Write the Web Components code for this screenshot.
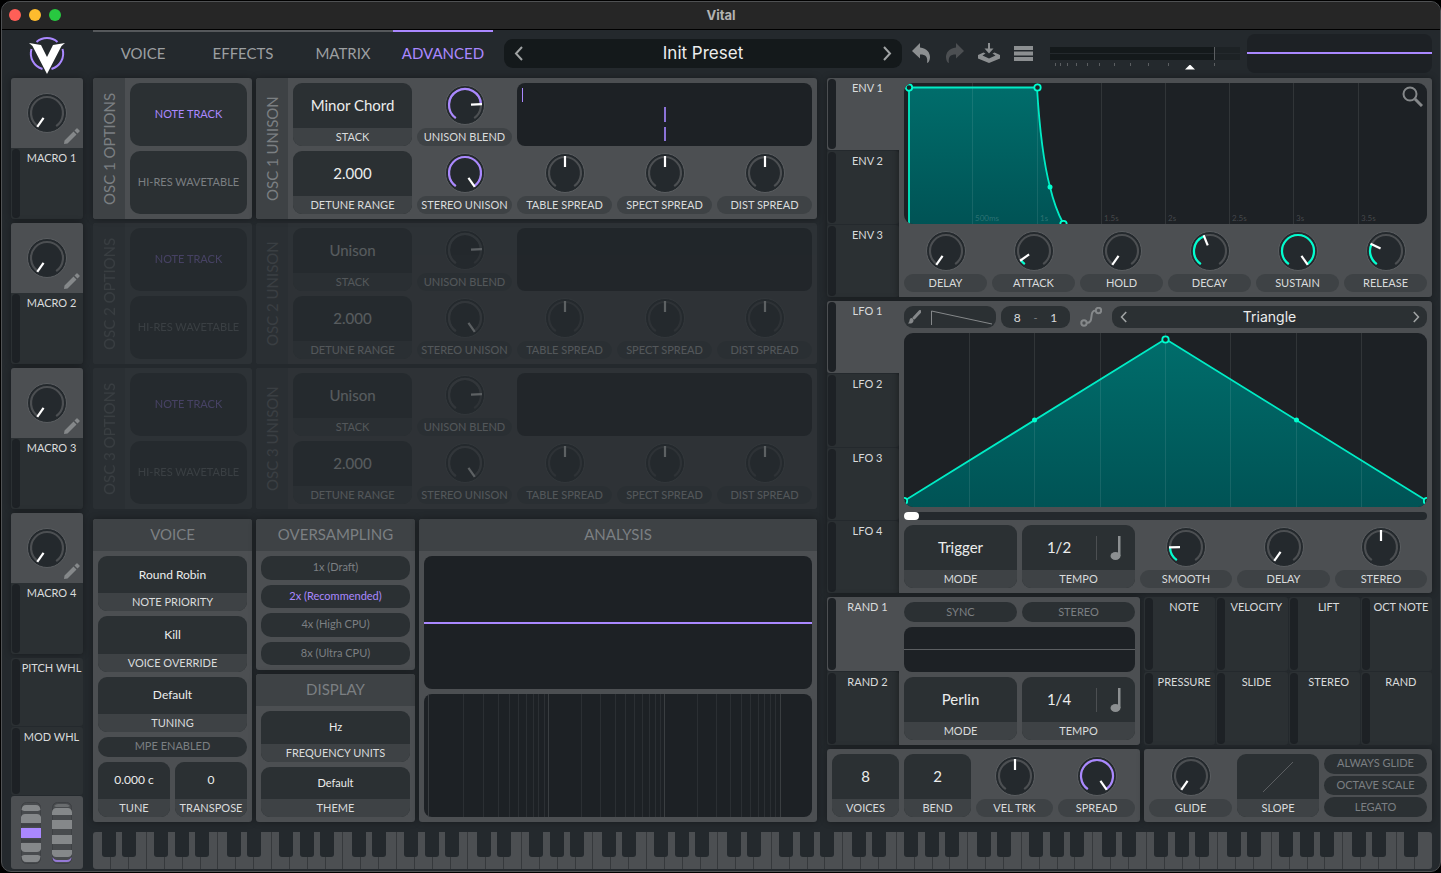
<!DOCTYPE html>
<html lang="en">
<head>
<meta charset="utf-8">
<meta name="viewport" content="width=device-width, initial-scale=1">
<title>Vital</title>
<style>
  :root {
    --bg: #24292d;
    --panel: #4c4f52;
    --strip: #3e4245;
    --box: #2b3033;
    --graph: #1d2125;
    --text: #d9dbdc;
    --muted: #7b7f82;
    --purple: #aa88ff;
    --teal: #00ffd0;
  }
  body {
    margin: 0;
    background: #000;
    color: var(--text);
    font-family: Lato, "Open Sans", sans-serif;
    font-size: 11px;
  }
</style>
</head>
<body>
<synth-window heading="Vital">
  <synth-header></synth-header>
  <synth-body></synth-body>
</synth-window>

<script>
  const resetStyles = `
    *, *::before, *::after { box-sizing: border-box; }
    button, input, select {
      font: inherit;
      color: inherit;
      background: none;
      border: 0;
      margin: 0;
      padding: 0;
      min-width: 0;
      appearance: none;
      outline: none;
    }
    button { cursor: pointer; }
    svg { display: block; }
  `;

  class SynthElement extends HTMLElement {
    connectedCallback() {
      if (this.shadowRoot) return;
      this.attachShadow({ mode: 'open' });
      this.shadowRoot.innerHTML = `<style>${resetStyles}${this.styles()}</style>${this.markup()}`;
    }

    attr(name, fallback = '') {
      return this.hasAttribute(name) ? this.getAttribute(name) : fallback;
    }

    styles() { return ''; }
    markup() { return '<slot></slot>'; }
  }

  // Window frame

  class SynthWindow extends SynthElement {
    styles() {
      return `
        :host {
          display: block;
          margin: 1px 0 0 1px;
          border: 1px solid #4f5153;
          border-radius: 10px;
          overflow: hidden;
          background: var(--bg);
        }
        header {
          display: grid;
          grid-template-columns: 1fr auto 1fr;
          align-items: center;
          height: 28px;
          padding: 0 7px 2px;
          background: #262626;
          border-bottom: 1px solid #000;
        }
        .lights { display: flex; gap: 8px; }
        .lights button { width: 12px; height: 12px; border-radius: 50%; }
        .close { background: #ff5f57; }
        .minimize { background: #febc2e; }
        .zoom { background: #28c840; }
        h1 {
          margin: 0;
          font: 700 13px/16px Inter, sans-serif;
          color: #b3b3b3;
        }
      `;
    }
    markup() {
      return `
        <header>
          <div class="lights">
            <button class="close" aria-label="Close"></button>
            <button class="minimize" aria-label="Minimize"></button>
            <button class="zoom" aria-label="Zoom"></button>
          </div>
          <h1>${this.attr('heading')}</h1>
        </header>
        <slot></slot>
      `;
    }
  }
  customElements.define('synth-window', SynthWindow);

  // Small controls

  class KnobControl extends SynthElement {
    styles() {
      return `
        :host { display: flex; flex-direction: column; height: 63px; min-width: 0; }
        :host([bare]) { height: 44px; }
        .dial { flex: 1; display: grid; place-items: start center; padding-top: 2px; }
        .dial > * { grid-area: 1 / 1; }
        input { width: 40px; height: 40px; opacity: 0; cursor: pointer; }
        label {
          height: 18px;
          line-height: 18px;
          border-radius: 9px;
          background: var(--strip);
          text-align: center;
          white-space: nowrap;
        }
        :host([bare]) label { display: none; }
        .value { stroke: var(--arc, var(--purple)); }
      `;
    }
    point(angle, radius) {
      const rad = angle * Math.PI / 180;
      return `${(20 + radius * Math.sin(rad)).toFixed(2)} ${(20 - radius * Math.cos(rad)).toFixed(2)}`;
    }
    arc(from, to) {
      const large = to - from > 180 ? 1 : 0;
      return `M${this.point(from, 16)} A16 16 0 ${large} 1 ${this.point(to, 16)}`;
    }
    markup() {
      const angle = Number(this.attr('angle', '-145'));
      const filled = this.hasAttribute('filled')
        ? `<path class="value" d="${this.arc(-145, angle)}" fill="none" stroke-width="2.200"/>`
        : '';
      return `
        <div class="dial">
          <svg width="40" height="40" viewBox="0 0 40 40" aria-hidden="true">
            <circle cx="20" cy="20" r="19.5" fill="#24292d" stroke="#5b5e61"/>
            <path d="${this.arc(-145, 145)}" fill="none" stroke="#4c4f52" stroke-width="2.200"/>
            ${filled}
            <path d="M${this.point(angle, 6)} L${this.point(angle, 17)}" stroke="#fff" stroke-width="2.200"/>
          </svg>
          <input id="knob" type="range" min="-145" max="145" value="${angle}">
        </div>
        <label for="knob">${this.attr('label')}</label>
      `;
    }
  }
  customElements.define('knob-control', KnobControl);

  class ValueBox extends SynthElement {
    styles() {
      return `
        :host {
          display: flex;
          flex-direction: column;
          height: 63px;
          min-width: 0;
          border-radius: 9px;
          overflow: hidden;
          background: var(--box);
        }
        .field { flex: 1; display: flex; align-items: center; min-height: 0; }
        select, input {
          flex: 1;
          width: 100%;
          height: 100%;
          padding-bottom: 1px;
          text-align: center;
          text-align-last: center;
          font-size: var(--value-size, 15px);
          color: #eceded;
        }
        label {
          height: 18px;
          line-height: 18px;
          background: var(--strip);
          text-align: center;
          white-space: nowrap;
        }
      `;
    }
    markup() {
      const value = this.attr('value');
      const field = this.hasAttribute('number')
        ? `<input id="field" type="text" value="${value}">`
        : `<select id="field"><option>${value}</option></select>`;
      return `
        <div class="field">${field}<slot></slot></div>
        <label for="field">${this.attr('label')}</label>
      `;
    }
  }
  customElements.define('value-box', ValueBox);

  class ToggleButton extends SynthElement {
    styles() {
      return `
        :host { display: flex; min-height: 19px; min-width: 0; }
        button {
          flex: 1;
          padding-bottom: 2px;
          border-radius: 10px;
          background: var(--box);
          color: var(--muted);
          white-space: nowrap;
        }
        :host([on]) button { color: var(--purple); }
      `;
    }
    markup() {
      return `<button type="button" aria-pressed="${this.hasAttribute('on')}"><slot></slot></button>`;
    }
  }
  customElements.define('toggle-button', ToggleButton);

  class NoteSwitch extends SynthElement {
    styles() {
      return `
        :host { display: flex; width: 39px; height: 24px; border-left: 1px solid #4c4f52; }
        button { flex: 1; display: grid; place-items: center; }
      `;
    }
    markup() {
      return `
        <button type="button" aria-label="Tempo type">
          <svg width="12" height="24" viewBox="0 0 12 24" fill="#8c8f91">
            <rect x="8" y="0" width="2.500" height="20"/>
            <ellipse cx="5.500" cy="20" rx="5" ry="4"/>
          </svg>
        </button>
      `;
    }
  }
  customElements.define('note-switch', NoteSwitch);

  class ModSource extends SynthElement {
    styles() {
      return `
        :host {
          display: flex;
          min-width: 0;
          background: var(--box);
          border-radius: 3px;
        }
        :host([active]) { background: var(--panel); }
        i {
          flex: none;
          width: 8px;
          margin: 1px 0 1px 1px;
          border-radius: 4px;
          background: var(--graph);
        }
        button {
          flex: 1;
          display: flex;
          justify-content: center;
          line-height: 20px;
          white-space: nowrap;
        }
      `;
    }
    markup() {
      return `<i></i><button type="button"><slot></slot></button>`;
    }
  }
  customElements.define('mod-source', ModSource);

  class SynthPanel extends SynthElement {
    styles() {
      return `
        :host {
          display: flex;
          flex-direction: column;
          min-width: 0;
          border-radius: 3px;
          overflow: hidden;
          background: var(--panel);
          box-shadow: 0 0 7px #0005;
        }
        :host([side]) { flex-direction: row; }
        h2 {
          flex: none;
          margin: 0;
          padding-bottom: 2px;
          font-size: 15px;
          font-weight: 400;
          line-height: 30px;
          text-align: center;
          color: var(--muted);
          background: var(--strip);
        }
        :host([side]) h2 {
          width: 32px;
          padding: 0;
          line-height: 32px;
          writing-mode: vertical-rl;
          transform: rotate(180deg);
        }
        .content {
          flex: 1;
          min-width: 0;
          display: flex;
          flex-direction: column;
          gap: 5px;
          padding: 5px;
        }
      `;
    }
    markup() {
      const heading = this.attr('heading');
      return `${heading ? `<h2>${heading}</h2>` : ''}<div class="content"><slot></slot></div>`;
    }
  }
  customElements.define('synth-panel', SynthPanel);

  // Header

  class VitalLogo extends SynthElement {
    styles() { return ':host { display: block; }'; }
    markup() {
      return `
        <svg width="40" height="40" viewBox="0 0 40 40" role="img" aria-label="Vital logo">
          <g fill="none" stroke="#aa88ff" stroke-width="2">
            <path d="M9.5 7 A16 16 0 0 1 30.500 7"/>
            <path d="M4.500 14 A16 16 0 0 0 15.500 34"/>
            <path d="M35.500 14 A16 16 0 0 1 24.500 34"/>
          </g>
          <path d="M2 8 L14 10 L20 22 L26 10 L38 8 L34.500 11 L20 39 L5.500 11 Z" fill="#fff"/>
        </svg>
      `;
    }
  }
  customElements.define('vital-logo', VitalLogo);

  class PresetSelector extends SynthElement {
    styles() {
      return `
        :host {
          display: flex;
          min-width: 0;
          height: 29px;
          border-radius: 9px;
          background: #14191b;
          font-family: Inter, sans-serif;
          font-size: 17px;
          color: #eceded;
        }
        :host([small]) { height: 22px; background: var(--box); font-size: 14px; }
        .name { flex: 1; padding-bottom: 1px; }
        .arrow { width: 29px; display: grid; place-items: center; }
        :host([small]) .arrow { width: 22px; }
        .arrow svg { width: 9px; height: 15px; fill: none; stroke: #a0a3a4; stroke-width: 2; }
        :host([small]) .arrow svg { width: 7px; height: 12px; }
      `;
    }
    markup() {
      return `
        <button class="arrow" type="button" aria-label="Previous"><svg viewBox="0 0 9 15"><path d="M8 1 L2 7.500 L8 14"/></svg></button>
        <button class="name" type="button"><slot></slot></button>
        <button class="arrow" type="button" aria-label="Next"><svg viewBox="0 0 9 15"><path d="M1 1 L7 7.500 L1 14"/></svg></button>
      `;
    }
  }
  customElements.define('preset-selector', PresetSelector);

  class VolumeMeter extends SynthElement {
    styles() {
      return `
        :host { display: grid; width: 190px; height: 24px; }
        svg, input { grid-area: 1 / 1; }
        input { align-self: end; width: 190px; height: 6px; }
        input::-webkit-slider-thumb {
          appearance: none;
          width: 10px;
          height: 5px;
          background: #fff;
          clip-path: polygon(50% 0, 100% 100%, 0 100%);
        }
      `;
    }
    markup() {
      const ticks = [5, 10, 17, 26, 37, 49, 64, 80, 98, 118, 164]
        .map(x => `<path d="M${x}.5 17 V20" stroke="#5b5e61"/>`).join('');
      return `
        <svg width="190" height="24" viewBox="0 0 190 24" aria-hidden="true">
          <rect width="190" height="13" y="1" fill="#1d2225"/>
          <rect width="164" height="13" y="1" fill="#14191b"/>
          <path d="M0 7.500 H190" stroke="#24292d"/>
          <path d="M164.500 1 V14" stroke="#5b5e61"/>
          ${ticks}
        </svg>
        <input type="range" min="0" max="100" value="75" aria-label="Volume">
      `;
    }
  }
  customElements.define('volume-meter', VolumeMeter);

  class SynthHeader extends SynthElement {
    styles() {
      return `
        :host {
          box-sizing: border-box;
          display: flex;
          align-items: center;
          height: 48px;
          padding: 0 8px 2px 9px;
        }
        vital-logo { width: 72px; padding: 4px 0 0 16px; box-sizing: border-box; }
        nav { align-self: start; display: flex; margin: 0 11px 0 10px; }
        nav button {
          width: 100px;
          height: 47px;
          padding-bottom: 4px;
          border-top: 2px solid #55585b;
          font-size: 15px;
          color: #9c9fa1;
        }
        nav button.current { border-color: var(--purple); color: var(--purple); }
        preset-selector { flex: 1; }
        .tools { display: flex; margin: 0 10px 0 2px; }
        .tools button { width: 34px; height: 34px; display: grid; place-items: center; }
        .tools svg { fill: #8c8f91; }
        .tools .off svg { fill: #4c4f52; }
        volume-meter { margin: 10px 7px 0 0; }
        .scope {
          width: 185px;
          height: 39px;
          border-radius: 8px;
          background: linear-gradient(#aa88ff, #aa88ff) center / 100% 2px no-repeat var(--graph);
        }
      `;
    }
    markup() {
      return `
        <vital-logo></vital-logo>
        <nav>
          <button type="button">VOICE</button>
          <button type="button">EFFECTS</button>
          <button type="button">MATRIX</button>
          <button type="button" class="current">ADVANCED</button>
        </nav>
        <preset-selector>Init Preset</preset-selector>
        <div class="tools">
          <button type="button" aria-label="Undo">
            <svg width="18" height="20" viewBox="0 0 18 20"><path d="M0 8 L8 0 V4.500 C15 5 18 10 18 14 C18 17 16.500 20 15 20 C16 14 14 11.500 8 11.500 V15.500 Z"/></svg>
          </button>
          <button type="button" class="off" aria-label="Redo">
            <svg width="18" height="20" viewBox="0 0 18 20"><path d="M18 8 L10 0 V4.500 C3 5 0 10 0 14 C0 17 1.500 20 3 20 C2 14 4 11.500 10 11.500 V15.500 Z"/></svg>
          </button>
          <button type="button" aria-label="Save">
            <svg width="22" height="20" viewBox="0 0 22 20">
              <path d="M10 0 H12 V5.500 H15.500 L11 10.500 L6.500 5.500 H10 Z"/>
              <path d="M0 12 L5.500 9.500 L7.500 10.500 L4.500 12.500 L11 15.500 L17.500 12.500 L14.500 10.500 L16.500 9.500 L22 12 V15.500 L11 20 L0 15.500 Z"/>
            </svg>
          </button>
          <button type="button" aria-label="Menu">
            <svg width="19" height="15" viewBox="0 0 19 15"><path d="M0 0 H19 V4 H0 Z M0 5.500 H19 V9.500 H0 Z M0 11 H19 V15 H0 Z"/></svg>
          </button>
        </div>
        <volume-meter></volume-meter>
        <div class="scope"></div>
      `;
    }
  }
  customElements.define('synth-header', SynthHeader);

  // Left column

  class MacroControl extends SynthElement {
    styles() {
      return `
        :host {
          display: flex;
          flex-direction: column;
          height: 141px;
          border-radius: 3px;
          overflow: hidden;
          background: var(--box);
          box-shadow: 0 0 7px #0005;
        }
        .top { position: relative; display: grid; align-items: center; height: 70px; background: var(--panel); }
        .edit { position: absolute; right: 3px; bottom: 4px; width: 16px; height: 16px; }
        mod-source { flex: 1; }
      `;
    }
    markup() {
      const name = `MACRO ${this.attr('number')}`;
      return `
        <div class="top">
          <knob-control bare label="${name}"></knob-control>
          <button class="edit" type="button" aria-label="Rename ${name}">
            <svg width="16" height="16" viewBox="0 0 16 16" fill="#85888a">
              <path d="M0 16 L0.500 12.500 L9.500 3.500 L12.500 6.500 L3.500 15.500 Z M10.500 2.500 L12.500 0.500 Q13 0 13.500 0.500 L15.500 2.500 Q16 3 15.500 3.500 L13.500 5.500 Z"/>
            </svg>
          </button>
        </div>
        <mod-source>${name}</mod-source>
      `;
    }
  }
  customElements.define('macro-control', MacroControl);

  class WheelPair extends SynthElement {
    styles() {
      return `
        :host {
          display: flex;
          justify-content: center;
          align-items: center;
          gap: 11px;
          height: 73px;
          padding-right: 1px;
          box-sizing: border-box;
          border-radius: 3px;
          background: var(--panel);
        }
      `;
    }
    markup() {
      return `
        <svg width="20" height="62" viewBox="0 0 20 62" role="img" aria-label="Pitch wheel">
          <rect x="0.500" y="0.500" width="19" height="61" rx="5" fill="#484b4e" stroke="#3e4144"/>
          <g fill="#85888a">
            <path d="M0.500 8 Q1 3 5 3 H15 Q19 3 19.500 8 L17 9 H3 Z"/>
            <path d="M0 15 Q1 12 4 12 H16 Q19 12 20 15 V21 H0 Z"/>
            <path d="M0 41 H20 V47 Q19 50 16 50 H4 Q1 50 0 47 Z"/>
            <path d="M0.500 54 L3 53 H17 L19.500 54 Q19 60 15 60 H5 Q1 60 0.500 54 Z"/>
          </g>
          <path d="M0 23 H20 M0 39 H20" stroke="#3e4144" stroke-width="3"/>
          <rect y="26" width="20" height="10" fill="#aa88ff"/>
        </svg>
        <svg width="20" height="62" viewBox="0 0 20 62" role="img" aria-label="Mod wheel">
          <rect x="0.500" y="0.500" width="19" height="61" rx="5" fill="#484b4e" stroke="#3e4144"/>
          <g fill="#85888a">
            <path d="M2 4 Q4 2 6 2 H14 Q16 2 18 4 L16 5 H4 Z" fill="#696c6e"/>
            <path d="M0 10 Q1 6 4 6 H16 Q19 6 20 10 V13 H0 Z"/>
            <rect y="18" width="20" height="9"/>
            <rect y="33" width="20" height="9"/>
            <path d="M0 48 H20 V52 Q19 55 16 55 H4 Q1 55 0 52 Z"/>
          </g>
          <path d="M0.500 55 Q2 58 5 58 H15 Q18 58 19.500 55 Q19.500 60 15 60 H5 Q0.500 60 0.500 55 Z" fill="#9579d6"/>
        </svg>
      `;
    }
  }
  customElements.define('wheel-pair', WheelPair);

  // Oscillator rows

  class OscRow extends SynthElement {
    styles() {
      return `
        :host { display: grid; grid-template-columns: 159fr 561fr; gap: 4px; }
        :host([off]) synth-panel { opacity: 0.26; box-shadow: none; --arc: #5b5e61; }
        toggle-button { height: 63px; }
        .unison { display: grid; grid-template-columns: 119fr repeat(4, 95fr); gap: 5px; }
        .phases { grid-column: span 3; height: 63px; border-radius: 8px; background: var(--graph); }
        .phases svg { width: 100%; height: 63px; }
      `;
    }
    markup() {
      const n = this.attr('number');
      const phases = this.hasAttribute('off') ? '' : `
        <svg viewBox="0 0 295 63" preserveAspectRatio="none" aria-hidden="true" fill="#8b72d8">
          <rect x="5" y="5" width="1" height="14" fill="#aa88ff"/>
          <rect x="147" y="24" width="2" height="15"/>
          <rect x="147" y="44" width="2" height="14"/>
        </svg>`;
      return `
        <synth-panel side heading="OSC ${n} OPTIONS">
          <toggle-button on>NOTE TRACK</toggle-button>
          <toggle-button>HI-RES WAVETABLE</toggle-button>
        </synth-panel>
        <synth-panel side heading="OSC ${n} UNISON">
          <div class="unison">
            <value-box label="STACK" value="${this.attr('stack')}"></value-box>
            <knob-control label="UNISON BLEND" angle="87" filled></knob-control>
            <div class="phases">${phases}</div>
            <value-box number label="DETUNE RANGE" value="2.000"></value-box>
            <knob-control label="STEREO UNISON" angle="145" filled></knob-control>
            <knob-control label="TABLE SPREAD" angle="0"></knob-control>
            <knob-control label="SPECT SPREAD" angle="0"></knob-control>
            <knob-control label="DIST SPREAD" angle="0"></knob-control>
          </div>
        </synth-panel>
      `;
    }
  }
  customElements.define('osc-row', OscRow);

  // Global settings

  class SettingsRow extends SynthElement {
    styles() {
      return `
        :host { display: grid; grid-template-columns: 159fr 159fr 398fr; gap: 4px; height: 303px; }
        .stack { display: flex; flex-direction: column; gap: 4px; min-width: 0; }
        value-box { flex: 1; --value-size: 12px; }
        .display value-box { --value-size: 11px; }
        .mpe { flex: none; height: 20px; }
        .pair { flex: 1; display: flex; gap: 5px; }
        .pair value-box { height: auto; }
        .oversampling { flex: 151; }
        .display { flex: 148; }
        .oversampling toggle-button { flex: 1; }
        .scope, .spectrum { border-radius: 8px; overflow: hidden; background-color: var(--graph); }
        .scope {
          flex: 133;
          background: linear-gradient(#aa88ff, #aa88ff) center / 100% 2px no-repeat var(--graph);
        }
        .spectrum { flex: 123; display: grid; }
        .spectrum svg { width: 100%; height: 100%; }
      `;
    }
    gridLines() {
      const minor = [39, 59, 74, 85, 94, 102, 109, 114, 120, 157, 176, 191, 201, 210, 218, 225, 231, 236, 273, 292, 306, 317, 326, 334, 340, 346, 351];
      const major = [4, 124, 240, 356];
      const line = (x, color) => `<path d="M${x}.5 0 V123" stroke="${color}" vector-effect="non-scaling-stroke"/>`;
      return minor.map(x => line(x, '#2b2f33')).join('') + major.map(x => line(x, '#3a3e41')).join('');
    }
    markup() {
      return `
        <synth-panel heading="VOICE">
          <value-box label="NOTE PRIORITY" value="Round Robin"></value-box>
          <value-box label="VOICE OVERRIDE" value="Kill"></value-box>
          <value-box label="TUNING" value="Default"></value-box>
          <toggle-button class="mpe">MPE ENABLED</toggle-button>
          <div class="pair">
            <value-box number label="TUNE" value="0.000 c"></value-box>
            <value-box number label="TRANSPOSE" value="0"></value-box>
          </div>
        </synth-panel>
        <div class="stack">
          <synth-panel class="oversampling" heading="OVERSAMPLING">
            <toggle-button>1x (Draft)</toggle-button>
            <toggle-button on>2x (Recommended)</toggle-button>
            <toggle-button>4x (High CPU)</toggle-button>
            <toggle-button>8x (Ultra CPU)</toggle-button>
          </synth-panel>
          <synth-panel class="display" heading="DISPLAY">
            <value-box label="FREQUENCY UNITS" value="Hz"></value-box>
            <value-box label="THEME" value="Default"></value-box>
          </synth-panel>
        </div>
        <synth-panel heading="ANALYSIS">
          <div class="scope"></div>
          <div class="spectrum">
            <svg viewBox="0 0 388 123" preserveAspectRatio="none" aria-hidden="true">${this.gridLines()}</svg>
          </div>
        </synth-panel>
      `;
    }
  }
  customElements.define('settings-row', SettingsRow);

  // Modulator sections on the right: source tabs and an editor

  class TabbedSection extends SynthElement {
    styles() {
      return `
        :host { display: grid; grid-template-columns: 72px 1fr; min-width: 0; border-radius: 3px; box-shadow: 0 0 7px #0005; }
        .tabs { display: flex; flex-direction: column; gap: 1px; }
        .tabs mod-source { flex: 1; }
        .editor {
          min-width: 0;
          display: flex;
          flex-direction: column;
          gap: 5px;
          padding: 5px;
          border-radius: 0 3px 3px 0;
          background: var(--panel);
          box-shadow: 0 0 9px #0006;
          clip-path: inset(0 0 0 -9px);
        }
        .tabs mod-source[active] { z-index: 1; border-radius: 3px 0 0 3px; }
      `;
    }
    markup() {
      const tabs = this.attr('tabs').split(',')
        .map((name, i) => `<mod-source ${i === 0 ? 'active' : ''}>${name}</mod-source>`).join('');
      return `<div class="tabs">${tabs}</div><div class="editor"><slot></slot></div>`;
    }
  }
  customElements.define('tabbed-section', TabbedSection);

  class EnvelopeGraph extends SynthElement {
    styles() {
      return `
        :host { position: relative; display: block; height: 141px; border-radius: 9px; overflow: hidden; background: var(--graph); }
        svg.graph { width: 100%; height: 141px; }
        text { font-size: 8px; fill: #fff; fill-opacity: 0.18; }
        button { position: absolute; top: 3px; right: 4px; width: 21px; height: 21px; }
      `;
    }
    markup() {
      const marks = [[68, '500ms'], [133, '1s'], [197, '1.5s'], [261, '2s'], [325, '2.5s'], [389, '3s'], [454, '3.5s']];
      const grid = marks.map(([x, name]) => `
        <path d="M${x}.5 0 V141" stroke="#fff" stroke-opacity="0.09"/>
        <text x="${x + 3}" y="138">${name}</text>`).join('');
      const curve = 'L5 4.500 H133 Q137 70 146 104 Q151 125 159 140';
      return `
        <svg class="graph" viewBox="0 0 523 141" preserveAspectRatio="none">
          <defs>
            <linearGradient id="fill" x1="0" y1="0" x2="0" y2="1">
              <stop offset="0" stop-color="#006d6b"/>
              <stop offset="1" stop-color="#005355"/>
            </linearGradient>
          </defs>
          <path d="M5 141 ${curve} V141 Z" fill="url(#fill)"/>
          ${grid}
          <path d="M5 141 ${curve}" fill="none" stroke="#00ecc5" stroke-width="1.800"/>
          <g fill="#1d2125" stroke="#00ffd0" stroke-width="1.800">
            <circle cx="5" cy="4.500" r="3.200"/>
            <circle cx="133.500" cy="4.500" r="3.200"/>
            <circle cx="159.500" cy="141" r="3.200"/>
          </g>
          <circle cx="146" cy="104" r="2.500" fill="#00ffd0"/>
        </svg>
        <button type="button" aria-label="Zoom">
          <svg width="21" height="21" viewBox="0 0 21 21" fill="none" stroke="#85888a">
            <circle cx="8" cy="8" r="6.500" stroke-width="2"/>
            <path d="M13 13 L20 20" stroke-width="3"/>
          </svg>
        </button>
      `;
    }
  }
  customElements.define('envelope-graph', EnvelopeGraph);

  class EnvelopeSection extends SynthElement {
    styles() {
      return `
        :host { display: block; --arc: var(--teal); }
        .knobs { display: grid; grid-template-columns: repeat(6, 1fr); gap: 5px; }
      `;
    }
    markup() {
      return `
        <tabbed-section tabs="ENV 1,ENV 2,ENV 3">
          <envelope-graph></envelope-graph>
          <div class="knobs">
            <knob-control label="DELAY"></knob-control>
            <knob-control label="ATTACK" angle="-125" filled></knob-control>
            <knob-control label="HOLD"></knob-control>
            <knob-control label="DECAY" angle="-22" filled></knob-control>
            <knob-control label="SUSTAIN" angle="145" filled></knob-control>
            <knob-control label="RELEASE" angle="-65" filled></knob-control>
          </div>
        </tabbed-section>
      `;
    }
  }
  customElements.define('envelope-section', EnvelopeSection);

  class LfoGraph extends SynthElement {
    styles() {
      return `
        :host { display: block; height: 174px; border-radius: 9px; overflow: hidden; background: var(--graph); }
        svg { width: 100%; height: 174px; }
      `;
    }
    markup() {
      let grid = '';
      for (let i = 1; i < 8; i++) {
        grid += `<path d="M${Math.floor(523 * i / 8)}.5 0 V174" stroke="#fff" stroke-opacity="0.09"/>`;
      }
      return `
        <svg viewBox="0 0 523 174" preserveAspectRatio="none" aria-hidden="true">
          <defs>
            <linearGradient id="fill" x1="0" y1="0" x2="0" y2="1">
              <stop offset="0" stop-color="#006d6b"/>
              <stop offset="1" stop-color="#005355"/>
            </linearGradient>
          </defs>
          <path d="M0 174 V168 L261.500 6 L523 168 V174 Z" fill="url(#fill)"/>
          ${grid}
          <path d="M0 168 L261.500 6 L523 168" fill="none" stroke="#00ecc5" stroke-width="1.800"/>
          <g fill="#1d2125" stroke="#00ffd0" stroke-width="1.800">
            <circle cx="0" cy="168" r="3.200"/>
            <circle cx="261.500" cy="6.500" r="3.200"/>
            <circle cx="523" cy="168" r="3.200"/>
          </g>
          <circle cx="130.500" cy="87" r="2.500" fill="#00ffd0"/>
          <circle cx="392.500" cy="87" r="2.500" fill="#00ffd0"/>
        </svg>
      `;
    }
  }
  customElements.define('lfo-graph', LfoGraph);

  class LfoSection extends SynthElement {
    styles() {
      return `
        :host { display: block; --arc: var(--teal); }
        .tools { display: grid; grid-template-columns: 92fr 69fr 32px 315fr; gap: 5px; height: 22px; }
        .paint, .size { display: flex; align-items: center; min-width: 0; border-radius: 9px; background: var(--box); }
        .paint { justify-content: space-between; padding: 0 4px; }
        .size input { flex: 1; text-align: center; font-size: 12px; }
        .size span { color: var(--muted); }
        .smooth { display: grid; place-items: center; }
        .scroll { height: 8px; border-radius: 4px; background: var(--bg); }
        .scroll input { display: block; width: 100%; height: 8px; }
        .scroll input::-webkit-slider-thumb {
          appearance: none;
          width: 15px;
          height: 8px;
          border-radius: 4px;
          background: #fff;
        }
        .controls { display: grid; grid-template-columns: 113fr 113fr 92fr 93fr 92fr; gap: 5px; }
      `;
    }
    markup() {
      return `
        <tabbed-section tabs="LFO 1,LFO 2,LFO 3,LFO 4">
          <div class="tools">
            <button class="paint" type="button" aria-label="Paint pattern">
              <svg width="13" height="14" viewBox="0 0 13 14">
                <path d="M6 8 L12 1.500" stroke="#85888a" stroke-width="3" stroke-linecap="round"/>
                <path d="M3 8 A2.500 2.500 0 0 1 5.500 11 Q5 14 0 13.500 Q1.500 12 1.500 10.500 Q1.500 8.500 3 8 Z" fill="#85888a"/>
              </svg>
              <svg width="65" height="15" viewBox="0 0 65 15"><path d="M4.500 15 V1 L65 14" fill="none" stroke="#85888a"/></svg>
            </button>
            <div class="size">
              <input type="text" value="8" aria-label="Grid columns"><span>-</span><input type="text" value="1" aria-label="Grid rows">
            </div>
            <button class="smooth" type="button" aria-label="Smooth mode">
              <svg width="22" height="20" viewBox="0 0 22 20" fill="none" stroke="#85888a" stroke-width="2">
                <circle cx="4" cy="16" r="2.700"/>
                <circle cx="18.500" cy="3.500" r="2.700"/>
                <path d="M6.500 16 C15 16 8 3.500 16 3.500"/>
              </svg>
            </button>
            <preset-selector small>Triangle</preset-selector>
          </div>
          <lfo-graph></lfo-graph>
          <div class="scroll"><input type="range" min="0" max="100" value="0" aria-label="Phase"></div>
          <div class="controls">
            <value-box label="MODE" value="Trigger"></value-box>
            <value-box label="TEMPO" value="1/2"><note-switch></note-switch></value-box>
            <knob-control label="SMOOTH" angle="-91" filled></knob-control>
            <knob-control label="DELAY"></knob-control>
            <knob-control label="STEREO" angle="0"></knob-control>
          </div>
        </tabbed-section>
      `;
    }
  }
  customElements.define('lfo-section', LfoSection);

  class RandomSection extends SynthElement {
    styles() {
      return `
        :host { display: block; min-width: 0; }
        .controls { display: grid; grid-template-columns: 1fr 1fr; gap: 5px; }
        toggle-button { height: 20px; }
        .wave {
          grid-column: span 2;
          height: 45px;
          border-radius: 8px;
          background: linear-gradient(#5b5e61, #5b5e61) center / 100% 1px no-repeat var(--graph);
        }
      `;
    }
    markup() {
      return `
        <tabbed-section tabs="RAND 1,RAND 2">
          <div class="controls">
            <toggle-button>SYNC</toggle-button>
            <toggle-button>STEREO</toggle-button>
            <div class="wave"></div>
            <value-box label="MODE" value="Perlin"></value-box>
            <value-box label="TEMPO" value="1/4"><note-switch></note-switch></value-box>
          </div>
        </tabbed-section>
      `;
    }
  }
  customElements.define('random-section', RandomSection);

  class SlopeBox extends SynthElement {
    styles() {
      return `
        :host { display: flex; flex-direction: column; height: 63px; border-radius: 9px; overflow: hidden; background: var(--box); }
        button { flex: 1; display: grid; place-items: center; }
        span { height: 18px; line-height: 18px; text-align: center; background: var(--strip); }
      `;
    }
    markup() {
      return `
        <button type="button" aria-labelledby="name">
          <svg width="32" height="32" viewBox="0 0 32 32"><path d="M1 31 L31 1" stroke="#5b5e61"/></svg>
        </button>
        <span id="name">SLOPE</span>
      `;
    }
  }
  customElements.define('slope-box', SlopeBox);

  class PerformanceArea extends SynthElement {
    styles() {
      return `
        :host { display: grid; grid-template-columns: 313fr 288fr; gap: 4px; }
        .sources { display: grid; grid-template-columns: repeat(4, 1fr); gap: 1px; }
        .voices { display: grid; grid-template-columns: 67fr 67fr 77fr 77fr; gap: 5px; }
        .glide { display: grid; grid-template-columns: 83fr 82fr 103fr; gap: 5px; }
        .toggles { display: flex; flex-direction: column; gap: 2px; height: 63px; }
        .toggles toggle-button { flex: 1; }
      `;
    }
    markup() {
      const sources = ['NOTE', 'VELOCITY', 'LIFT', 'OCT NOTE', 'PRESSURE', 'SLIDE', 'STEREO', 'RAND'];
      return `
        <random-section></random-section>
        <div class="sources">${sources.map(name => `<mod-source>${name}</mod-source>`).join('')}</div>
        <synth-panel>
          <div class="voices">
            <value-box number label="VOICES" value="8"></value-box>
            <value-box number label="BEND" value="2"></value-box>
            <knob-control label="VEL TRK" angle="0"></knob-control>
            <knob-control label="SPREAD" angle="145" filled></knob-control>
          </div>
        </synth-panel>
        <synth-panel>
          <div class="glide">
            <knob-control label="GLIDE"></knob-control>
            <slope-box></slope-box>
            <div class="toggles">
              <toggle-button>ALWAYS GLIDE</toggle-button>
              <toggle-button>OCTAVE SCALE</toggle-button>
              <toggle-button>LEGATO</toggle-button>
            </div>
          </div>
        </synth-panel>
      `;
    }
  }
  customElements.define('performance-area', PerformanceArea);

  // 128 notes: 75 white keys starting on C

  class PianoKeyboard extends SynthElement {
    styles() {
      return `
        :host { display: block; height: 37px; border-radius: 3px; overflow: hidden; background: var(--panel); }
        svg { width: 100%; height: 37px; }
      `;
    }
    markup() {
      const white = 1339 / 75;
      const blackCenters = [16, 36, 68, 89, 109];
      let keys = '';
      for (let i = 1; i < 75; i++) {
        keys += `<path d="M${Math.floor(i * white)}.5 0 V37" stroke="#36393c"/>`;
      }
      for (let note = 0; note < 53; note++) {
        const x = Math.floor(note / 5) * white * 7 + blackCenters[note % 5] - 7;
        keys += `<rect x="${Math.round(x)}" y="-4" width="14" height="29" rx="3" fill="#24292d"/>`;
      }
      return `<svg viewBox="0 0 1339 37" preserveAspectRatio="none" role="img" aria-label="Keyboard">${keys}</svg>`;
    }
  }
  customElements.define('piano-keyboard', PianoKeyboard);

  class SynthBody extends SynthElement {
    styles() {
      return `
        :host {
          display: grid;
          grid-template-columns: 72px 724fr 605fr;
          gap: 10px;
          padding: 0 8px 2px 9px;
        }
        .left { grid-row: span 2; display: flex; flex-direction: column; gap: 4px; }
        .wheels { display: flex; flex-direction: column; gap: 1px; }
        .wheels mod-source { height: 68px; }
        .middle, .right { display: flex; flex-direction: column; gap: 4px; min-width: 0; }
        settings-row { margin-top: 6px; }
        piano-keyboard { grid-column: span 2; }
      `;
    }
    markup() {
      return `
        <div class="left">
          <macro-control number="1"></macro-control>
          <macro-control number="2"></macro-control>
          <macro-control number="3"></macro-control>
          <macro-control number="4"></macro-control>
          <div class="wheels">
            <mod-source>PITCH WHL</mod-source>
            <mod-source>MOD WHL</mod-source>
            <wheel-pair></wheel-pair>
          </div>
        </div>
        <div class="middle">
          <osc-row number="1" stack="Minor Chord"></osc-row>
          <osc-row number="2" stack="Unison" off></osc-row>
          <osc-row number="3" stack="Unison" off></osc-row>
          <settings-row></settings-row>
        </div>
        <div class="right">
          <envelope-section></envelope-section>
          <lfo-section></lfo-section>
          <performance-area></performance-area>
        </div>
        <piano-keyboard></piano-keyboard>
      `;
    }
  }
  customElements.define('synth-body', SynthBody);
</script>
</body>
</html>
